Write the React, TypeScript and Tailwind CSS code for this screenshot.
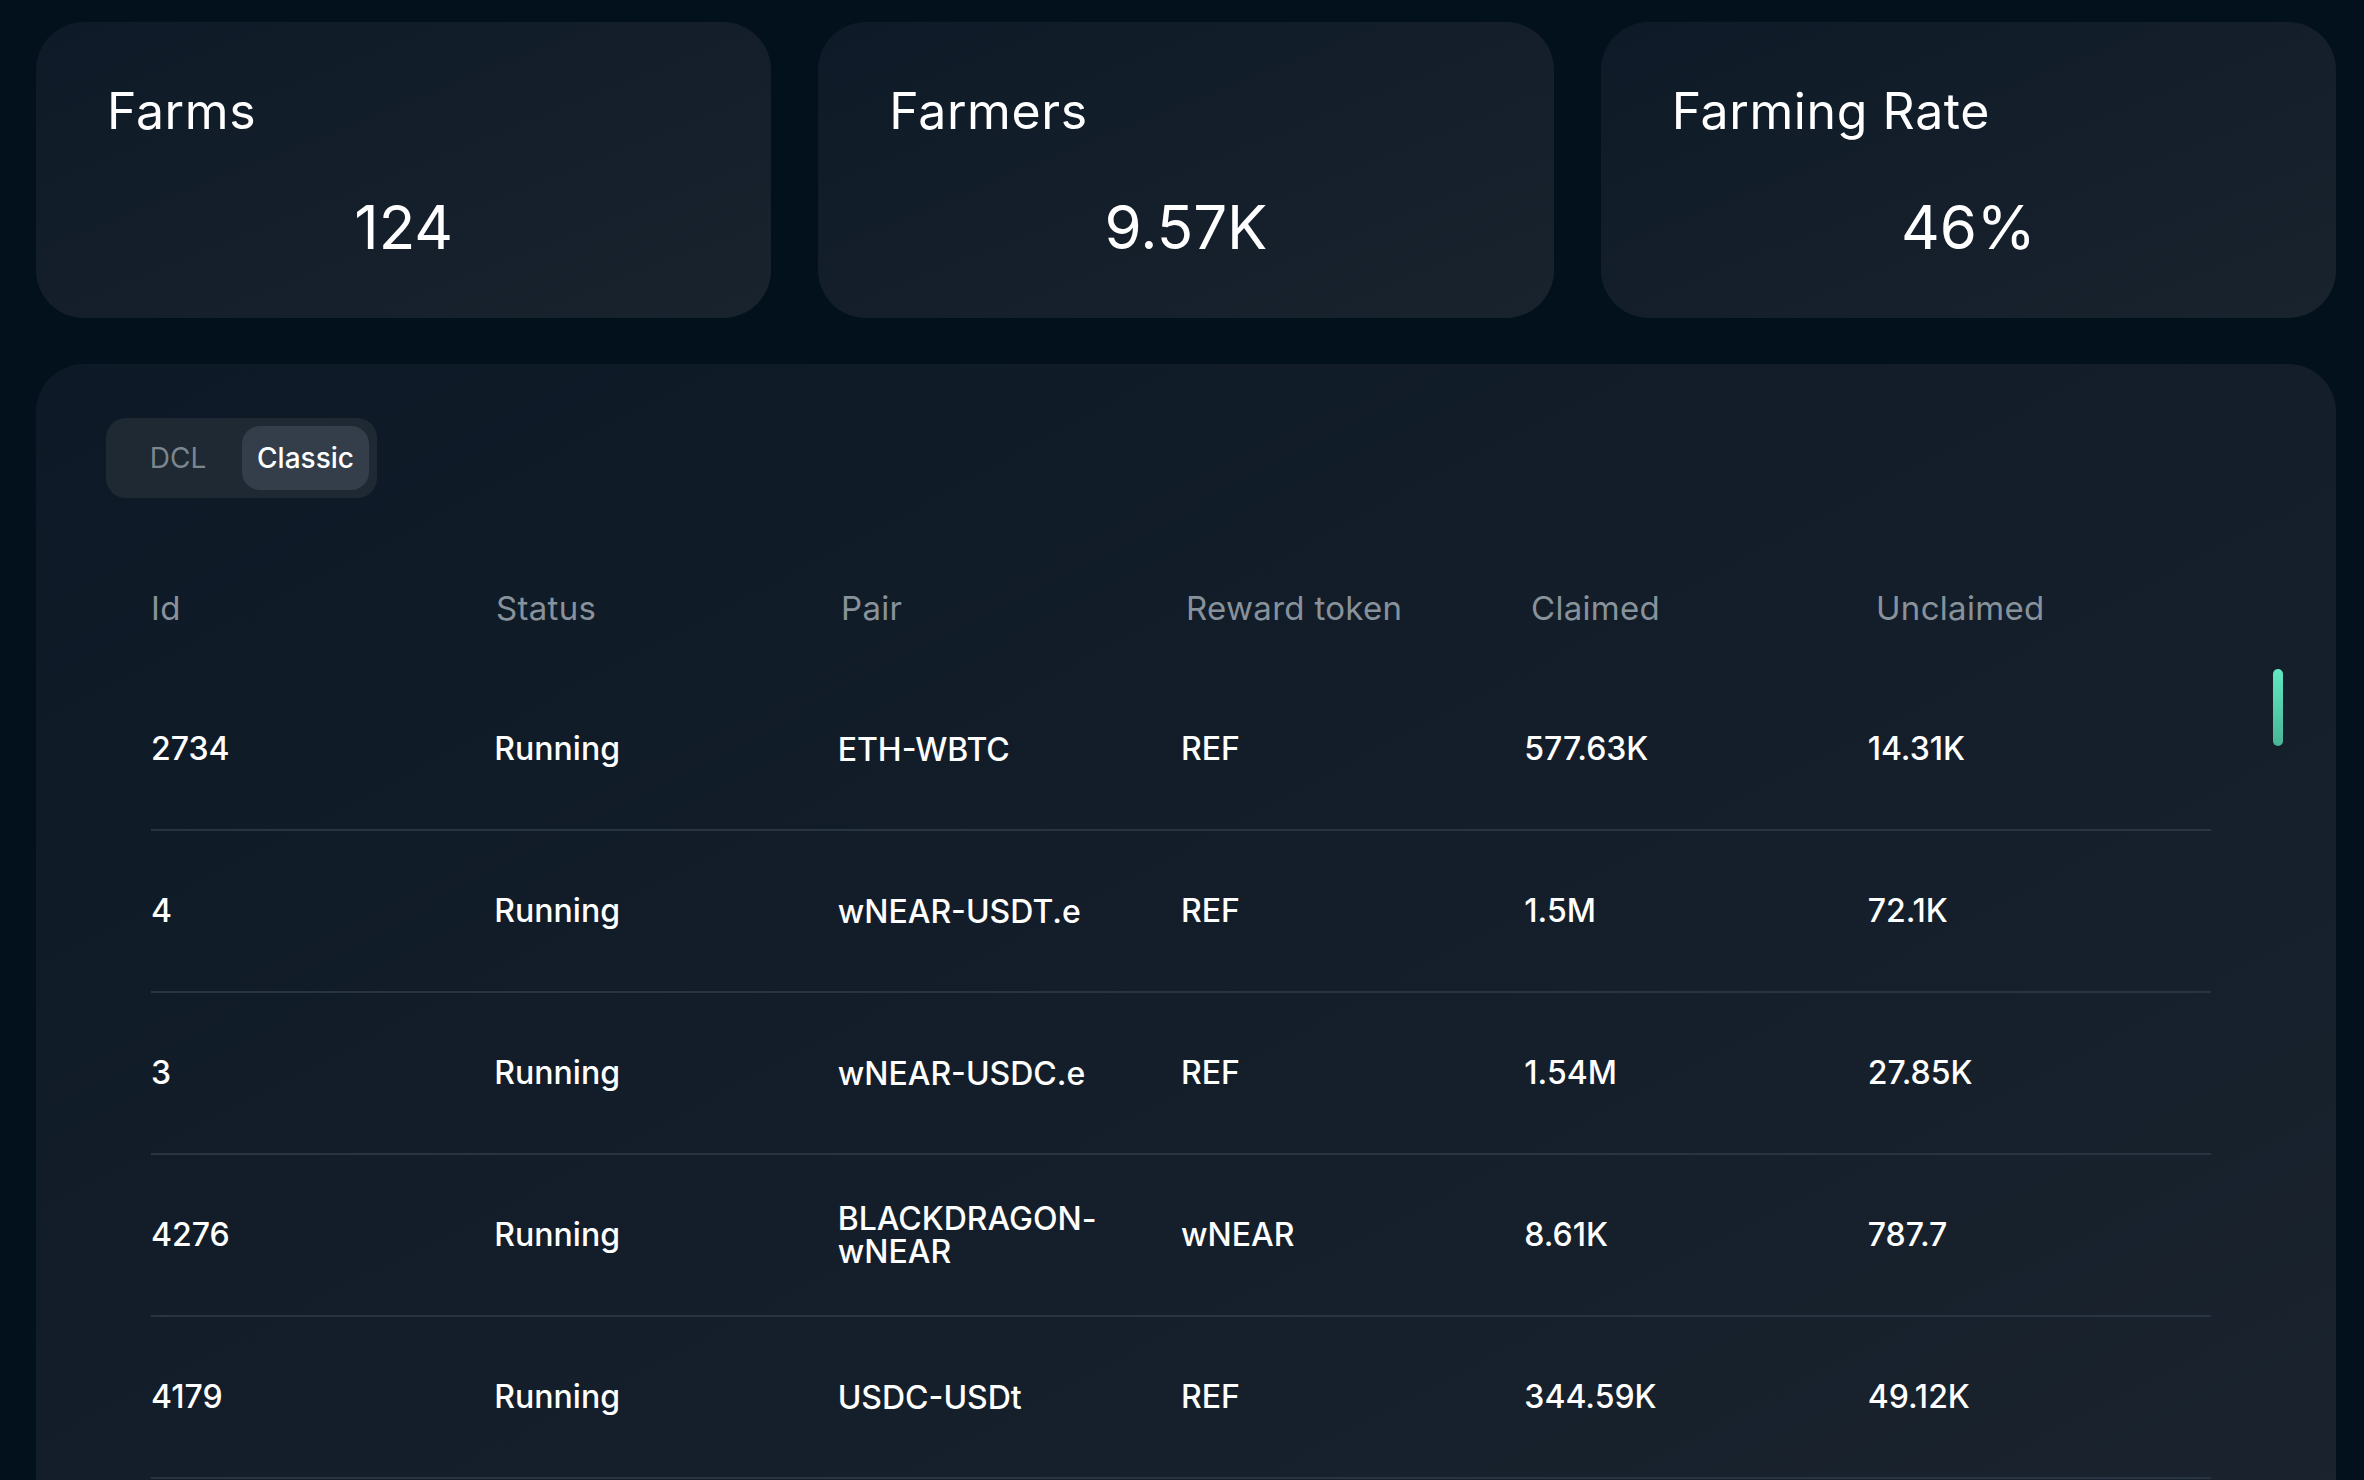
import React, { useState } from 'react';

interface FarmRow {
  id: string;
  status: string;
  pair: string;
  reward: string;
  claimed: string;
  unclaimed: string;
}

const stats = [
  { label: 'Farms', value: '124' },
  { label: 'Farmers', value: '9.57K' },
  { label: 'Farming Rate', value: '46%' },
];

const rows: FarmRow[] = [
  { id: '2734', status: 'Running', pair: 'ETH-WBTC', reward: 'REF', claimed: '577.63K', unclaimed: '14.31K' },
  { id: '4', status: 'Running', pair: 'wNEAR-USDT.e', reward: 'REF', claimed: '1.5M', unclaimed: '72.1K' },
  { id: '3', status: 'Running', pair: 'wNEAR-USDC.e', reward: 'REF', claimed: '1.54M', unclaimed: '27.85K' },
  { id: '4276', status: 'Running', pair: 'BLACKDRAGON-wNEAR', reward: 'wNEAR', claimed: '8.61K', unclaimed: '787.7' },
  { id: '4179', status: 'Running', pair: 'USDC-USDt', reward: 'REF', claimed: '344.59K', unclaimed: '49.12K' },
];

const columns = ['Id', 'Status', 'Pair', 'Reward token', 'Claimed', 'Unclaimed'];

export default function App() {
  const [tab, setTab] = useState<'dcl' | 'classic'>('classic');

  return (
    <div className="h-[1480px] overflow-hidden bg-[#03111c] pl-[36px] pr-[28px] pt-[22px] font-['Inter',sans-serif] text-white">
      {/* Stat cards */}
      <div className="grid grid-cols-3 gap-[47px]">
        {stats.map((s) => (
          <div
            key={s.label}
            className="h-[296px] rounded-[48px] bg-gradient-to-br from-[#0e1a27] to-[#19232e] pl-[71px] pt-[64px]"
          >
            <p className="text-[50px] leading-[50px] font-normal tracking-[0.6px]">{s.label}</p>
            <p className="mt-[61px] -ml-[71px] text-center text-[60px] leading-[60px] font-normal">{s.value}</p>
          </div>
        ))}
      </div>

      {/* Farms table panel */}
      <div className="mt-[46px] h-[1200px] rounded-[48px] bg-gradient-to-br from-[#0d1926] to-[#1a232e] pt-[54px]">
        <div className="ml-[70px] inline-flex rounded-[20px] bg-[#1e2934] p-[8px]">
          <button
            onClick={() => setTab('dcl')}
            className={`flex h-[64px] w-[128px] items-center justify-center rounded-[18px] text-[28px] ${
              tab === 'dcl' ? 'bg-[#333e4a] font-medium text-white' : 'text-[#7b868f]'
            }`}
          >
            DCL
          </button>
          <button
            onClick={() => setTab('classic')}
            className={`flex h-[64px] w-[127px] items-center justify-center rounded-[18px] text-[28px] ${
              tab === 'classic' ? 'bg-[#333e4a] font-medium text-white' : 'text-[#7b868f]'
            }`}
          >
            Classic
          </button>
        </div>

        {/* Header */}
        <div className="ml-[115px] mt-[51px] grid h-[120px] w-[2070px] grid-cols-6 items-center">
          {columns.map((c) => (
            <span key={c} className="text-[33px] tracking-[0.3px] text-[#88929b]">
              {c}
            </span>
          ))}
        </div>

        {/* Body */}
        <div className="relative">
          <div className="absolute right-[53px] top-[0px] h-[77px] w-[10px] rounded-full bg-gradient-to-b from-[#62e8c3] to-[#48b596]" />
          {rows.map((r) => (
            <div
              key={r.id}
              className="ml-[115px] grid h-[162px] w-[2060px] grid-cols-6 items-center border-b-2 border-[#283441] text-[32px] font-medium"
            >
              <span>{r.id}</span>
              <span>{r.status}</span>
              <span className="pr-[24px] leading-[33px]">{r.pair}</span>
              <span>{r.reward}</span>
              <span>{r.claimed}</span>
              <span>{r.unclaimed}</span>
            </div>
          ))}
        </div>
      </div>
    </div>
  );
}
